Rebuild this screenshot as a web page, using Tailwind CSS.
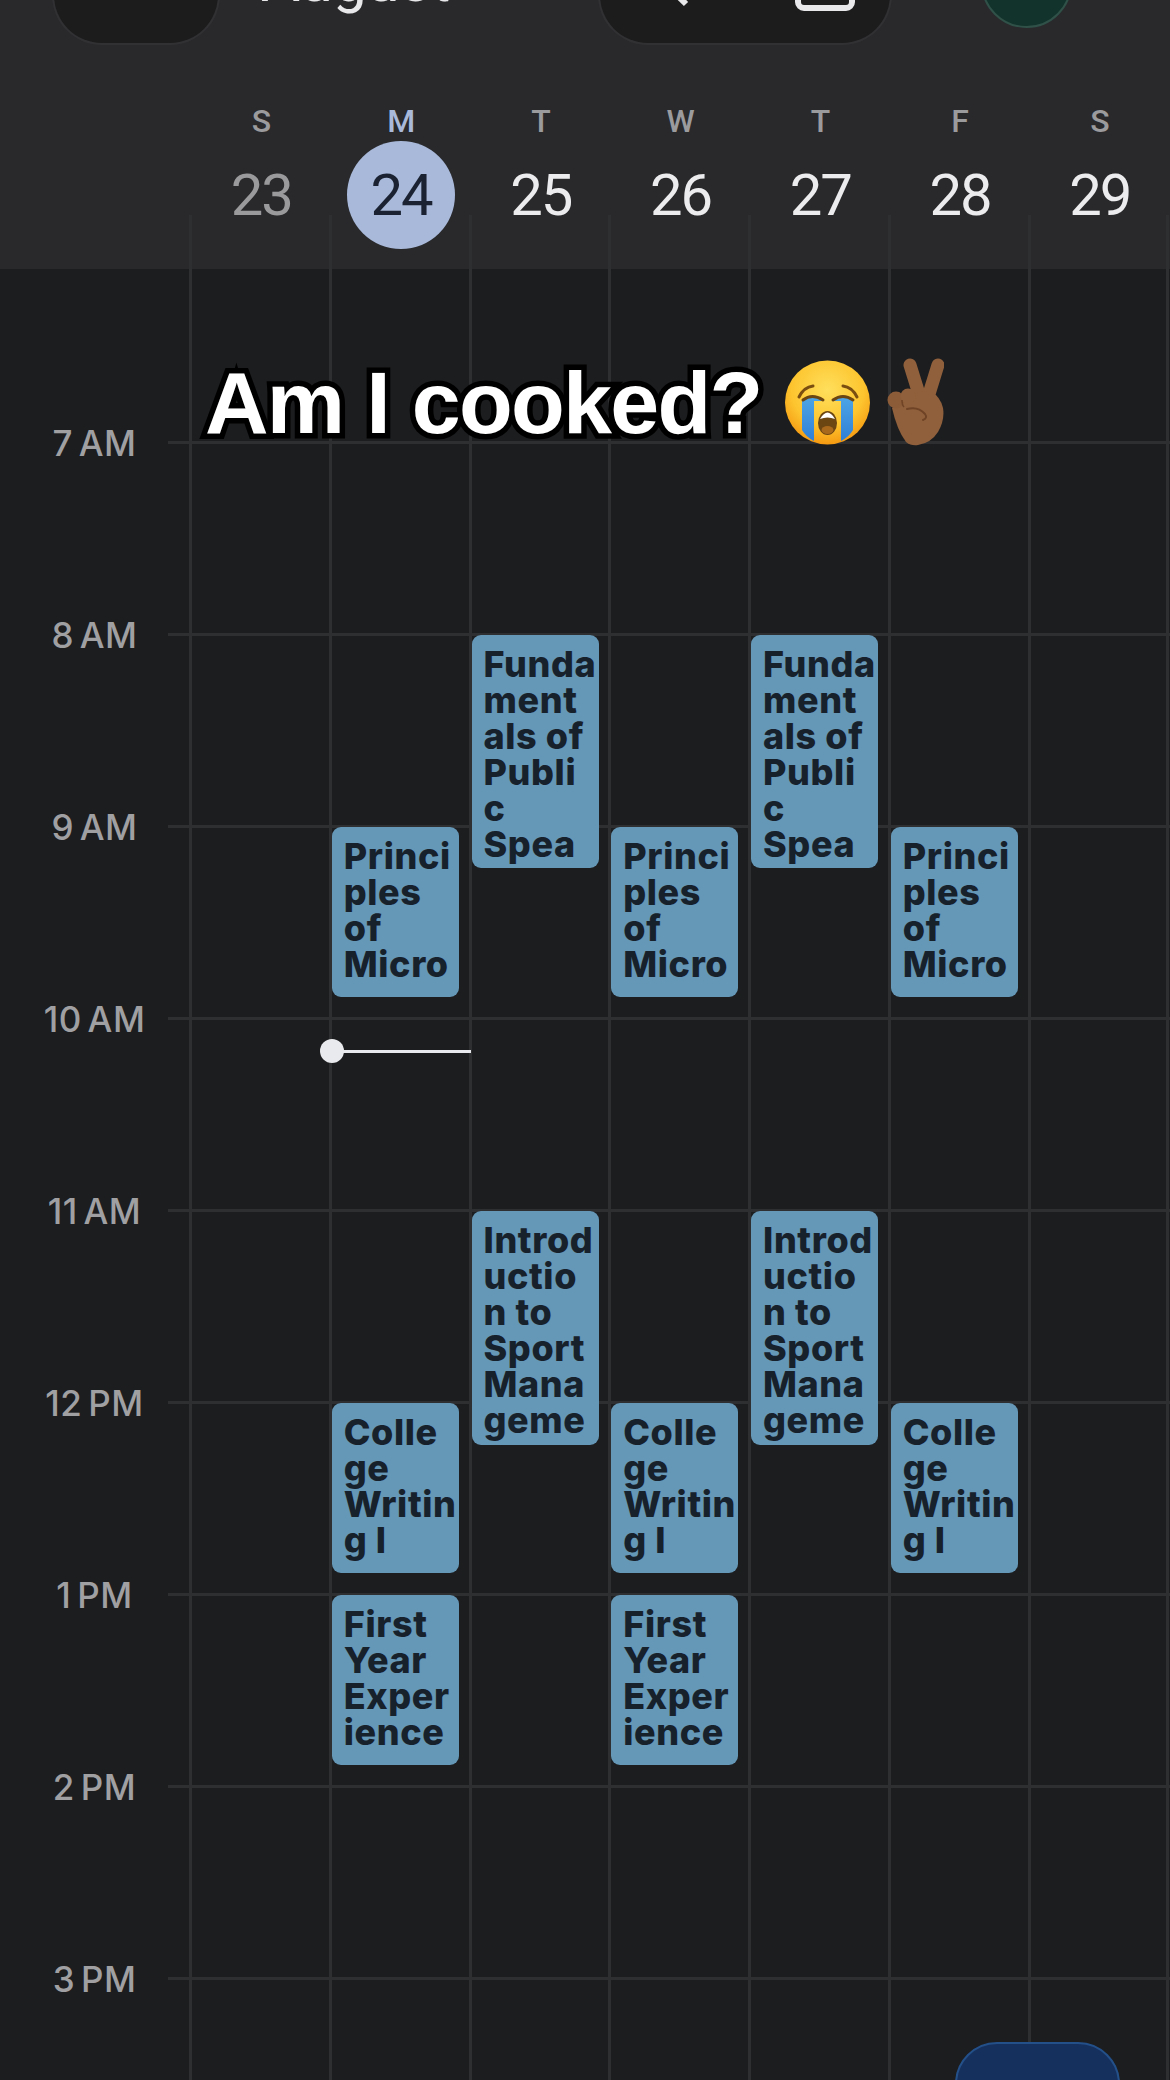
<!DOCTYPE html>
<html lang="en">
<head>
  <meta charset="UTF-8" />
  <meta name="viewport" content="width=device-width, initial-scale=1.0" />
  <title>Calendar week</title>
  <script src="https://cdn.jsdelivr.net/npm/@tailwindcss/browser@4"></script>
</head>
<body class="bg-[#1c1d1f]">
  <div class="relative w-[1170px] h-[2080px] overflow-hidden bg-[#1c1d1f] font-['Roboto',sans-serif]">

    <!-- header -->
    <header class="h-[269px] bg-[#29292c]">
      <div class="h-[100px] overflow-hidden">
        <div class="flex items-start -mt-[63px]">
          <div class="ml-[52px] w-[168px] h-[108px] rounded-b-[50px] bg-[#1c1c1d] border-b-2 border-x-2 border-[#313134]"></div>
          <div class="ml-[41px] w-[337px] mt-[14px] text-[60px] leading-[60px] text-[#e8e8ea]">August</div>
          <div class="w-[294px] h-[108px] rounded-b-[50px] bg-[#1c1c1d] border-b-2 border-x-2 border-[#313134] flex items-start pt-[63px]">
            <svg class="ml-[73px]" width="20" height="8" viewBox="0 0 20 8"><path d="M3 -6 L13 4" stroke="#e8e8ea" stroke-width="6" fill="none"/></svg>
            <svg class="ml-[102px]" width="60" height="11" viewBox="0 0 60 11"><path d="M3 0 V2 A6 6 0 0 0 9 8 H51 A6 6 0 0 0 57 2 V0" stroke="#e8e8ea" stroke-width="6" fill="none"/></svg>
          </div>
          <div class="ml-[89px] w-[91px] h-[91px] rounded-full bg-[#12332b] border-2 border-[#2f5148]"></div>
        </div>
      </div>
      <div class="flex pl-[191.5px]">
        <div class="w-[139.75px] flex flex-col items-center"><span class="h-[41px] text-[32px] leading-[43px] font-medium text-[#9b9b9e]">S</span><span class="size-[108px] flex items-center justify-center text-[58px] tracking-[-2px] text-[#9a9a9c]">23</span></div>
        <div class="w-[139.75px] flex flex-col items-center"><span class="h-[41px] text-[32px] leading-[43px] font-medium text-[#a8b9d9]">M</span><span class="size-[108px] rounded-full bg-[#a8b9d9] flex items-center justify-center text-[58px] tracking-[-2px] text-[#1b2333]">24</span></div>
        <div class="w-[139.75px] flex flex-col items-center"><span class="h-[41px] text-[32px] leading-[43px] font-medium text-[#9b9b9e]">T</span><span class="size-[108px] flex items-center justify-center text-[58px] tracking-[-2px] text-[#ececee]">25</span></div>
        <div class="w-[139.75px] flex flex-col items-center"><span class="h-[41px] text-[32px] leading-[43px] font-medium text-[#9b9b9e]">W</span><span class="size-[108px] flex items-center justify-center text-[58px] tracking-[-2px] text-[#ececee]">26</span></div>
        <div class="w-[139.75px] flex flex-col items-center"><span class="h-[41px] text-[32px] leading-[43px] font-medium text-[#9b9b9e]">T</span><span class="size-[108px] flex items-center justify-center text-[58px] tracking-[-2px] text-[#ececee]">27</span></div>
        <div class="w-[139.75px] flex flex-col items-center"><span class="h-[41px] text-[32px] leading-[43px] font-medium text-[#9b9b9e]">F</span><span class="size-[108px] flex items-center justify-center text-[58px] tracking-[-2px] text-[#ececee]">28</span></div>
        <div class="w-[139.75px] flex flex-col items-center"><span class="h-[41px] text-[32px] leading-[43px] font-medium text-[#9b9b9e]">S</span><span class="size-[108px] flex items-center justify-center text-[58px] tracking-[-2px] text-[#ececee]">29</span></div>
      </div>
    </header>

    <!-- hour rows -->
    <div class="pt-[172px] font-['Inter',sans-serif] font-medium text-[35px] leading-[40px] tracking-[0.5px] text-[#a0a0a3] [word-spacing:-4px]">
      <div class="flex h-[192px]"><div class="w-[168px] pl-[21px] text-center -mt-[18px]">7 AM</div><div class="flex-1 border-t-[3px] border-[#2e2f31]"></div></div>
      <div class="flex h-[192px]"><div class="w-[168px] pl-[21px] text-center -mt-[18px]">8 AM</div><div class="flex-1 border-t-[3px] border-[#2e2f31]"></div></div>
      <div class="flex h-[192px]"><div class="w-[168px] pl-[21px] text-center -mt-[18px]">9 AM</div><div class="flex-1 border-t-[3px] border-[#2e2f31]"></div></div>
      <div class="flex h-[192px]"><div class="w-[168px] pl-[21px] text-center -mt-[18px]">10 AM</div><div class="flex-1 border-t-[3px] border-[#2e2f31]"></div></div>
      <div class="flex h-[192px]"><div class="w-[168px] pl-[21px] text-center -mt-[18px]">11 AM</div><div class="flex-1 border-t-[3px] border-[#2e2f31]"></div></div>
      <div class="flex h-[192px]"><div class="w-[168px] pl-[21px] text-center -mt-[18px]">12 PM</div><div class="flex-1 border-t-[3px] border-[#2e2f31]"></div></div>
      <div class="flex h-[192px]"><div class="w-[168px] pl-[21px] text-center -mt-[18px]">1 PM</div><div class="flex-1 border-t-[3px] border-[#2e2f31]"></div></div>
      <div class="flex h-[192px]"><div class="w-[168px] pl-[21px] text-center -mt-[18px]">2 PM</div><div class="flex-1 border-t-[3px] border-[#2e2f31]"></div></div>
      <div class="flex h-[192px]"><div class="w-[168px] pl-[21px] text-center -mt-[18px]">3 PM</div><div class="flex-1 border-t-[3px] border-[#2e2f31]"></div></div>
    </div>

    <!-- day columns, events lie over the hour rows -->
    <div class="absolute top-[215px] left-[189px] bottom-0 flex font-['Inter',sans-serif] font-extrabold text-[36px] leading-[36px] tracking-[0.6px] text-[#17212c]">
      <div class="relative w-[139.75px] border-l-[3px] border-[#2e2f31]"></div>

      <div class="relative w-[139.75px] border-l-[3px] border-[#2e2f31]">
        <div class="absolute top-[612px] left-0 w-[127px] h-[170px] rounded-[9px] bg-[#6597b7] pl-[12px] pt-[11px] whitespace-nowrap overflow-hidden">Princi<br>ples<br>of<br>Micro</div>
        <div class="absolute top-[1188px] left-0 w-[127px] h-[170px] rounded-[9px] bg-[#6597b7] pl-[12px] pt-[11px] whitespace-nowrap overflow-hidden">Colle<br>ge<br>Writin<br>g I</div>
        <div class="absolute top-[1380px] left-0 w-[127px] h-[170px] rounded-[9px] bg-[#6597b7] pl-[12px] pt-[11px] whitespace-nowrap overflow-hidden">First<br>Year<br>Exper<br>ience</div>
        <div class="absolute z-10 top-[835px] left-0 w-[139px] h-[3px] bg-[#e8eaed]"></div>
        <div class="absolute z-10 top-[824px] -left-[12px] size-[24px] rounded-full bg-[#e8eaed]"></div>
      </div>

      <div class="relative w-[139.75px] border-l-[3px] border-[#2e2f31]">
        <div class="absolute top-[420px] left-0 w-[127px] h-[233px] rounded-[9px] bg-[#6597b7] pl-[12px] pt-[11px] whitespace-nowrap overflow-hidden">Funda<br>ment<br>als of<br>Publi<br>c<br>Spea</div>
        <div class="absolute top-[996px] left-0 w-[127px] h-[234px] rounded-[9px] bg-[#6597b7] pl-[12px] pt-[11px] whitespace-nowrap overflow-hidden">Introd<br>uctio<br>n to<br>Sport<br>Mana<br>geme</div>
      </div>

      <div class="relative w-[139.75px] border-l-[3px] border-[#2e2f31]">
        <div class="absolute top-[612px] left-0 w-[127px] h-[170px] rounded-[9px] bg-[#6597b7] pl-[12px] pt-[11px] whitespace-nowrap overflow-hidden">Princi<br>ples<br>of<br>Micro</div>
        <div class="absolute top-[1188px] left-0 w-[127px] h-[170px] rounded-[9px] bg-[#6597b7] pl-[12px] pt-[11px] whitespace-nowrap overflow-hidden">Colle<br>ge<br>Writin<br>g I</div>
        <div class="absolute top-[1380px] left-0 w-[127px] h-[170px] rounded-[9px] bg-[#6597b7] pl-[12px] pt-[11px] whitespace-nowrap overflow-hidden">First<br>Year<br>Exper<br>ience</div>
      </div>

      <div class="relative w-[139.75px] border-l-[3px] border-[#2e2f31]">
        <div class="absolute top-[420px] left-0 w-[127px] h-[233px] rounded-[9px] bg-[#6597b7] pl-[12px] pt-[11px] whitespace-nowrap overflow-hidden">Funda<br>ment<br>als of<br>Publi<br>c<br>Spea</div>
        <div class="absolute top-[996px] left-0 w-[127px] h-[234px] rounded-[9px] bg-[#6597b7] pl-[12px] pt-[11px] whitespace-nowrap overflow-hidden">Introd<br>uctio<br>n to<br>Sport<br>Mana<br>geme</div>
      </div>

      <div class="relative w-[139.75px] border-l-[3px] border-[#2e2f31]">
        <div class="absolute top-[612px] left-0 w-[127px] h-[170px] rounded-[9px] bg-[#6597b7] pl-[12px] pt-[11px] whitespace-nowrap overflow-hidden">Princi<br>ples<br>of<br>Micro</div>
        <div class="absolute top-[1188px] left-0 w-[127px] h-[170px] rounded-[9px] bg-[#6597b7] pl-[12px] pt-[11px] whitespace-nowrap overflow-hidden">Colle<br>ge<br>Writin<br>g I</div>
      </div>

      <div class="relative w-[141px] border-x-[3px] border-[#2e2f31]"></div>
    </div>

    <!-- caption pasted over the video -->
    <div class="absolute left-[205px] top-[353px] flex items-start">
      <span class="w-[580px] font-['Liberation_Sans',sans-serif] font-bold text-[88px] leading-[100px] tracking-[-1.7px] whitespace-nowrap text-white [-webkit-text-stroke:11px_#000] [paint-order:stroke_fill]">Am I cooked?</span>
      <svg class="mt-[7px]" width="85" height="85" viewBox="0 0 85 85">
        <defs>
          <radialGradient id="faceFill" cx="50%" cy="35%" r="65%">
            <stop offset="0" stop-color="#ffdf5c"/>
            <stop offset="0.65" stop-color="#fdc52f"/>
            <stop offset="1" stop-color="#f59a12"/>
          </radialGradient>
          <linearGradient id="tearFill" x1="0" y1="0" x2="0" y2="1">
            <stop offset="0" stop-color="#4ea6e6"/>
            <stop offset="1" stop-color="#2f7fd6"/>
          </linearGradient>
        </defs>
        <ellipse cx="42.5" cy="42.5" rx="42.5" ry="42" fill="url(#faceFill)"/>
        <path d="M17 40 Q27 32 38 40 V41 H29 V81 Q21 77 17 70 Z" fill="url(#tearFill)"/>
        <path d="M68 40 Q58 32 47 40 V41 H56 V81 Q64 77 68 70 Z" fill="url(#tearFill)"/>
        <path d="M14 37 Q19 27 28 26" stroke="#7a4d10" stroke-width="3" fill="none" stroke-linecap="round"/>
        <path d="M72 37 Q67 27 58 26" stroke="#7a4d10" stroke-width="3" fill="none" stroke-linecap="round"/>
        <path d="M18 40 Q27 33 38 40" stroke="#6b4512" stroke-width="3" fill="none" stroke-linecap="round"/>
        <path d="M48 40 Q58 33 68 40" stroke="#6b4512" stroke-width="3" fill="none" stroke-linecap="round"/>
        <ellipse cx="42.5" cy="63" rx="9.5" ry="12" fill="#6b4512"/>
        <path d="M35 59 Q42.5 46 50 59 Q42.5 56 35 59 Z" fill="#fff"/>
        <ellipse cx="42.5" cy="70" rx="6" ry="4" fill="#a8691c"/>
      </svg>
      <svg class="ml-[17px] mt-[5px]" width="57" height="88" viewBox="0 0 57 88">
        <path d="M23 7 L32 36" stroke="#90603c" stroke-width="13" stroke-linecap="round" fill="none"/>
        <path d="M51 7 L42 36" stroke="#90603c" stroke-width="13" stroke-linecap="round" fill="none"/>
        <path d="M5 50 Q10 72 19 84 Q24 88 31 87 Q44 85 51 74 Q58 62 56 50 Q53 38 44 34 Q36 32 28 36 L14 44 Z" fill="#90603c"/>
        <circle cx="9" cy="42" r="8.5" fill="#8c5b38"/>
        <circle cx="21" cy="38" r="7.5" fill="#90603c"/>
        <path d="M15 42 Q15 47 17 49" stroke="#6f4325" stroke-width="1.5" fill="none"/>
        <path d="M20 51 Q31 48 38 56 Q41 60 36 62" stroke="#6f4325" stroke-width="2" fill="none" stroke-linecap="round"/>
      </svg>
    </div>

    <!-- floating button, cut off by the bottom of the page -->
    <div class="absolute left-[955px] top-[2042px] w-[165px] h-[120px] rounded-[42px] bg-[#16305e] border-2 border-[#24508a]"></div>
  </div>
</body>
</html>
